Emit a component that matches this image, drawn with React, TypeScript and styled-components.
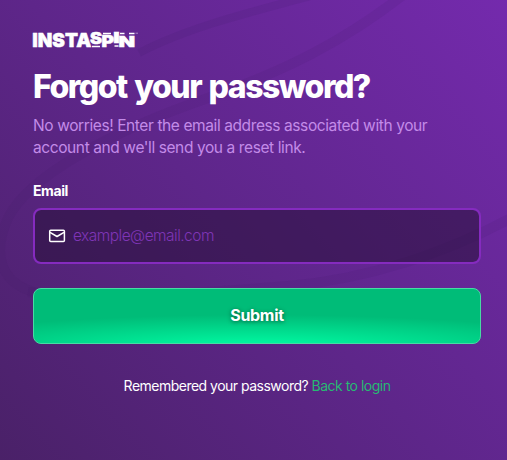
import React from "react";
import styled, { createGlobalStyle } from "styled-components";

const GlobalStyle = createGlobalStyle`
  *, *::before, *::after { box-sizing: border-box; }
  html, body { margin: 0; padding: 0; }
  body { background: #5c2685; }
`;

const Page = styled.main`
  position: relative;
  isolation: isolate;
  width: 100%;
  max-width: 507px;
  height: 460px;
  overflow: hidden;
  padding: 32px 26px 0 33px;
  font-family: Inter, "Liberation Sans", sans-serif;
  color: #fff;
  background: linear-gradient(48deg, #4a2168 0%, #5e268a 48%, #742aad 100%);
`;

const Swirls = styled.svg`
  position: absolute;
  inset: 0;
  z-index: -1;
`;

const Logo = styled.svg`
  display: block;
  width: 106px;
  height: 16px;
  overflow: visible;
`;

const Title = styled.h1`
  margin: 19px 0 0;
  font-size: 32px;
  line-height: 40px;
  font-weight: 800;
  letter-spacing: -1.5px;
  word-spacing: 2px;
  white-space: nowrap;
`;

const Intro = styled.p`
  margin: 8px 0 0;
  font-size: 15.5px;
  line-height: 22px;
  color: #c38be8;
`;

const Line = styled.span<{ $tracking: number }>`
  display: block;
  white-space: nowrap;
  letter-spacing: ${(p) => p.$tracking}px;
`;

const Label = styled.label`
  display: block;
  margin-top: 22px;
  font-size: 14px;
  line-height: 20px;
  font-weight: 700;
  letter-spacing: -0.4px;
`;

const Field = styled.div`
  display: flex;
  align-items: center;
  gap: 7px;
  height: 56px;
  margin-top: 7px;
  padding: 0 14px 0 13px;
  border: 2px solid #852bbf;
  border-radius: 8px;
  background: rgba(38, 16, 55, 0.55);
  background-clip: padding-box;
`;

const Input = styled.input`
  flex: 1;
  min-width: 0;
  padding: 0;
  border: 0;
  outline: 0;
  background: transparent;
  color: #fff;
  font: 300 15.5px/24px Inter, sans-serif;
  letter-spacing: -0.53px;
  &::placeholder { color: #7f35b6; opacity: 1; }
`;

const Submit = styled.button`
  display: block;
  width: 100%;
  height: 56px;
  margin-top: 24px;
  padding: 0 0 2px;
  border: 1px solid #48dba4;
  border-radius: 8px;
  background: radial-gradient(ellipse 78% 60% at 50% 108%, #00f9a4 0%, #00f19c 20%, #00bc78 100%) padding-box, #00bc78;
  color: #fff;
  font: 700 16px/24px Inter, sans-serif;
  letter-spacing: -0.3px;
  text-shadow: 0 1px 4px rgba(0, 0, 0, 0.5);
`;

const Footer = styled.p`
  margin: 32px 0 0;
  font-size: 14px;
  line-height: 20px;
  letter-spacing: -0.51px;
  text-align: center;
  white-space: nowrap;
`;

const LoginLink = styled.a`
  color: #27b973;
  text-decoration: none;
`;

function BackgroundSwirls() {
  return (
    <Swirls width="507" height="460" viewBox="0 0 507 460" fill="none" aria-hidden="true">
      <g stroke="#3f1c68" strokeOpacity=".14">
        <path d="M318-6C250 12 186 28 139 53" strokeWidth="8" />
        <path d="M412-12C345 42 282 72 205 99C116 130 30 174 8 218C-8 254 0 282 34 292" strokeWidth="10" strokeOpacity=".11" />
        <path d="M515 216C447 253 368 279 288 286C205 293 105 300 28 292" strokeWidth="10" strokeOpacity=".12" />
      </g>
    </Swirls>
  );
}

function BrandLogo() {
  return (
    <Logo viewBox="0 0 106 16" role="img" aria-label="Instaspin">
      <g fill="#fff" stroke="#fff" strokeWidth=".5" fontFamily="Inter, sans-serif" fontWeight="900">
        <text x="-.8" y="14.8" fontSize="19.3" textLength="59" lengthAdjust="spacingAndGlyphs">INSTA</text>
        <text x="57" y="12.4" fontSize="15.5" textLength="12" lengthAdjust="spacingAndGlyphs">S</text>
        <text x="68.5" y="14.8" fontSize="15.5" textLength="12.5" lengthAdjust="spacingAndGlyphs">P</text>
        <text x="80.3" y="11.4" fontSize="14.5" textLength="6.4" lengthAdjust="spacingAndGlyphs">I</text>
        <text x="85.4" y="14.8" fontSize="15" textLength="16.6" lengthAdjust="spacingAndGlyphs">N</text>
      </g>
      <path d="M59 14.5H67M70 1.5H78M81.5 13.9H85.5M87 1.5H91.5M96 1.5H101.5" stroke="#fff" strokeWidth="1.5" />
      <path d="M102.5 1.2H105" stroke="#cbb3db" strokeWidth=".7" />
    </Logo>
  );
}

function MailIcon() {
  return (
    <svg width="18" height="14" viewBox="0 0 18 14" fill="none" stroke="#fff" strokeWidth="1.5" strokeLinejoin="round" aria-hidden="true">
      <rect x="1.7" y="1.2" width="14.7" height="11.2" rx="1" />
      <path d="M2 3.4L9 7.5L16 3.4" />
    </svg>
  );
}

export default function App() {
  return (
    <>
      <GlobalStyle />
      <Page>
        <BackgroundSwirls />
        <BrandLogo />
        <Title>Forgot your password?</Title>
        <Intro>
          <Line $tracking={-0.4}>No worries! Enter the email address associated with your</Line>
          <Line $tracking={-0.4}>account and we'll send you a reset link.</Line>
        </Intro>
        <Label htmlFor="email">Email</Label>
        <Field>
          <MailIcon />
          <Input id="email" type="email" placeholder="example@email.com" />
        </Field>
        <Submit type="button">Submit</Submit>
        <Footer>
          Remembered your password? <LoginLink href="#login">Back to login</LoginLink>
        </Footer>
      </Page>
    </>
  );
}
